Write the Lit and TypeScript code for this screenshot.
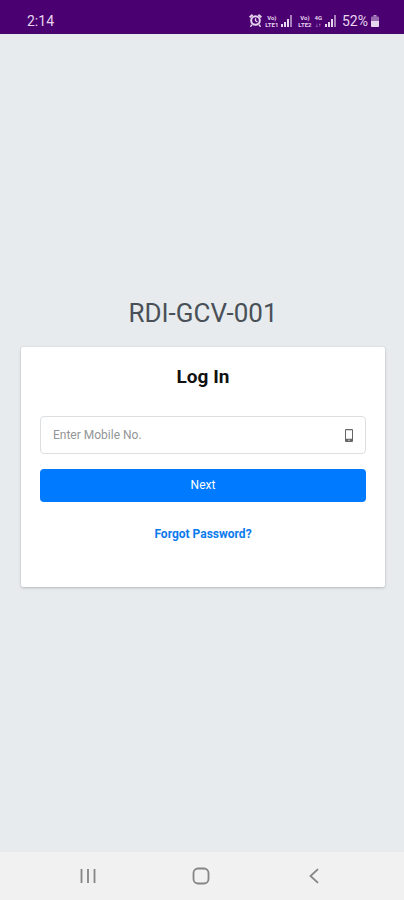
import { LitElement, html, css } from "lit";
import { customElement } from "lit/decorators.js";

@customElement("status-bar")
class StatusBar extends LitElement {
  static styles = css`
    :host {
      display: flex;
      align-items: center;
      justify-content: space-between;
      height: 34px;
      box-sizing: border-box;
      padding: 8px 25px 0 27px;
      background: #4b0072;
      border-bottom: 1px solid #45066a;
      color: #e6d6ee;
      font-size: 14px;
      line-height: 16px;
    }
    .icons {
      display: flex;
      align-items: center;
      gap: 3px;
    }
    .stack {
      display: grid;
      justify-items: center;
      font-size: 6px;
      line-height: 7px;
      font-weight: 700;
    }
    .signal {
      margin-right: 2px;
    }
    svg {
      display: block;
      fill: currentColor;
    }
  `;

  private signal() {
    return html`<svg class="signal" width="12" height="12" viewBox="0 0 12 12" aria-hidden="true">
      <path d="M0 9h2v3H0z" />
      <path d="M3 7h2v5H3z" />
      <path d="M6 4h2v8H6z" />
      <path d="M9 0h2v12H9z" opacity=".6" />
    </svg>`;
  }

  render() {
    return html`
      <span>2:14</span>
      <div class="icons">
        <svg width="13" height="13" viewBox="0 0 13 13" aria-label="Alarm">
          <path d="M0 2.5 3 0l1.2 1.4-3 2.5zM13 2.5 10 0 8.8 1.4l3 2.5z" />
          <path fill-rule="evenodd" d="M6.5 1.2a5.3 5.3 0 1 1 0 10.6 5.3 5.3 0 0 1 0-10.6zm0 2a3.3 3.3 0 1 0 0 6.6 3.3 3.3 0 0 0 0-6.6z" />
          <path d="M5.9 4.2h1.3v2.2l1.5 1-.6 1L5.9 7.1zM2 10l1.6 1.4L2 13H1zM11 10l-1.6 1.4L11 13h1z" />
        </svg>
        <span class="stack"><span>Vo)</span><span>LTE1</span></span>
        ${this.signal()}
        <span class="stack"><span>Vo)</span><span>LTE2</span></span>
        <span class="stack"><span>4G</span><span>↓↑</span></span>
        ${this.signal()}
        <span>52%</span>
        <svg width="8" height="12" viewBox="0 0 8 12" aria-label="Battery">
          <path d="M2.5 0h3v1.5h-3z" opacity=".7" />
          <rect y="1.5" width="8" height="10.5" rx="1" opacity=".5" />
          <path d="M0 6h8v5a1 1 0 0 1-1 1H1a1 1 0 0 1-1-1z" />
        </svg>
      </div>
    `;
  }
}

@customElement("login-card")
class LoginCard extends LitElement {
  static styles = css`
    :host {
      display: block;
      background: #fff;
      border-radius: 2px;
      box-shadow: 0 0 1px rgba(0, 0, 0, 0.13), 0 1px 3px rgba(0, 0, 0, 0.2);
      padding: 18px 19px 45px;
    }
    h2 {
      margin: 0 0 27px;
      text-align: center;
      font-size: 19px;
      line-height: 24px;
      font-weight: 700;
      color: #111;
    }
    .field {
      display: flex;
      align-items: center;
      height: 38px;
      box-sizing: border-box;
      border: 1px solid #dcdfe2;
      border-radius: 4px;
      padding: 0 11px 0 12px;
      color: #666;
    }
    input {
      flex: 1;
      min-width: 0;
      border: 0;
      outline: 0;
      padding: 0;
      background: none;
      font: inherit;
      font-size: 12px;
      color: #495057;
    }
    input::placeholder {
      color: #939597;
      opacity: 1;
    }
    button {
      display: block;
      width: 100%;
      height: 33px;
      margin: 15px 0 24px;
      border: 0;
      border-radius: 4px;
      padding: 0 0 2px;
      background: #007bff;
      color: #fff;
      font: inherit;
      font-size: 12px;
    }
    .forgot {
      display: block;
      text-align: center;
      font-size: 12px;
      line-height: 16px;
      font-weight: 700;
      color: #0b7aec;
      text-decoration: none;
    }
  `;

  render() {
    return html`
      <h2>Log In</h2>
      <label class="field">
        <input type="tel" placeholder="Enter Mobile No." aria-label="Enter Mobile No." />
        <svg width="10" height="13" viewBox="0 0 10 13" aria-hidden="true">
          <path
            fill="currentColor"
            fill-rule="evenodd"
            d="M2 0h6a1 1 0 0 1 1 1v11a1 1 0 0 1-1 1H2a1 1 0 0 1-1-1V1a1 1 0 0 1 1-1zm0 1.2v8.6h6V1.2zM4.4 10.8v1h1.2v-1z"
          />
        </svg>
      </label>
      <button type="button">Next</button>
      <a class="forgot" href="#">Forgot Password?</a>
    `;
  }
}

@customElement("nav-bar")
class NavBar extends LitElement {
  static styles = css`
    :host {
      display: grid;
      grid-template-columns: repeat(3, 1fr);
      height: 48px;
      box-sizing: border-box;
      padding: 0 33px 0 31px;
      background: #f1f1f1;
    }
    button {
      display: grid;
      place-items: center;
      border: 0;
      padding: 0;
      background: none;
      color: #858585;
    }
    svg {
      fill: none;
      stroke: currentColor;
    }
  `;

  render() {
    return html`
      <button aria-label="Recent apps">
        <svg width="16" height="16" viewBox="0 0 16 16" stroke-width="1.8">
          <path d="M1.5 1v14M8 1v14M14.5 1v14" />
        </svg>
      </button>
      <button aria-label="Home">
        <svg width="18" height="18" viewBox="0 0 18 18" stroke-width="1.8">
          <rect x="1.5" y="1.5" width="15" height="15" rx="4.5" />
        </svg>
      </button>
      <button aria-label="Back">
        <svg width="10" height="16" viewBox="0 0 10 16" stroke-width="1.8">
          <path d="M9 1.2 1.5 8 9 14.8" />
        </svg>
      </button>
    `;
  }
}

@customElement("app-root")
class AppRoot extends LitElement {
  static styles = css`
    :host {
      display: flex;
      flex-direction: column;
      min-height: 100vh;
      background: #e7ebee;
      font-family: Roboto, "Liberation Sans", sans-serif;
    }
    main {
      flex: 1;
      display: flex;
      flex-direction: column;
      justify-content: center;
      gap: 20px;
      padding: 0 19px 0 21px;
    }
    h1 {
      margin: 0;
      text-align: center;
      font-size: 26px;
      line-height: 28px;
      font-weight: 400;
      color: #495057;
    }
  `;

  render() {
    return html`
      <status-bar></status-bar>
      <main>
        <h1>RDI-GCV-001</h1>
        <login-card></login-card>
      </main>
      <nav-bar></nav-bar>
    `;
  }
}
